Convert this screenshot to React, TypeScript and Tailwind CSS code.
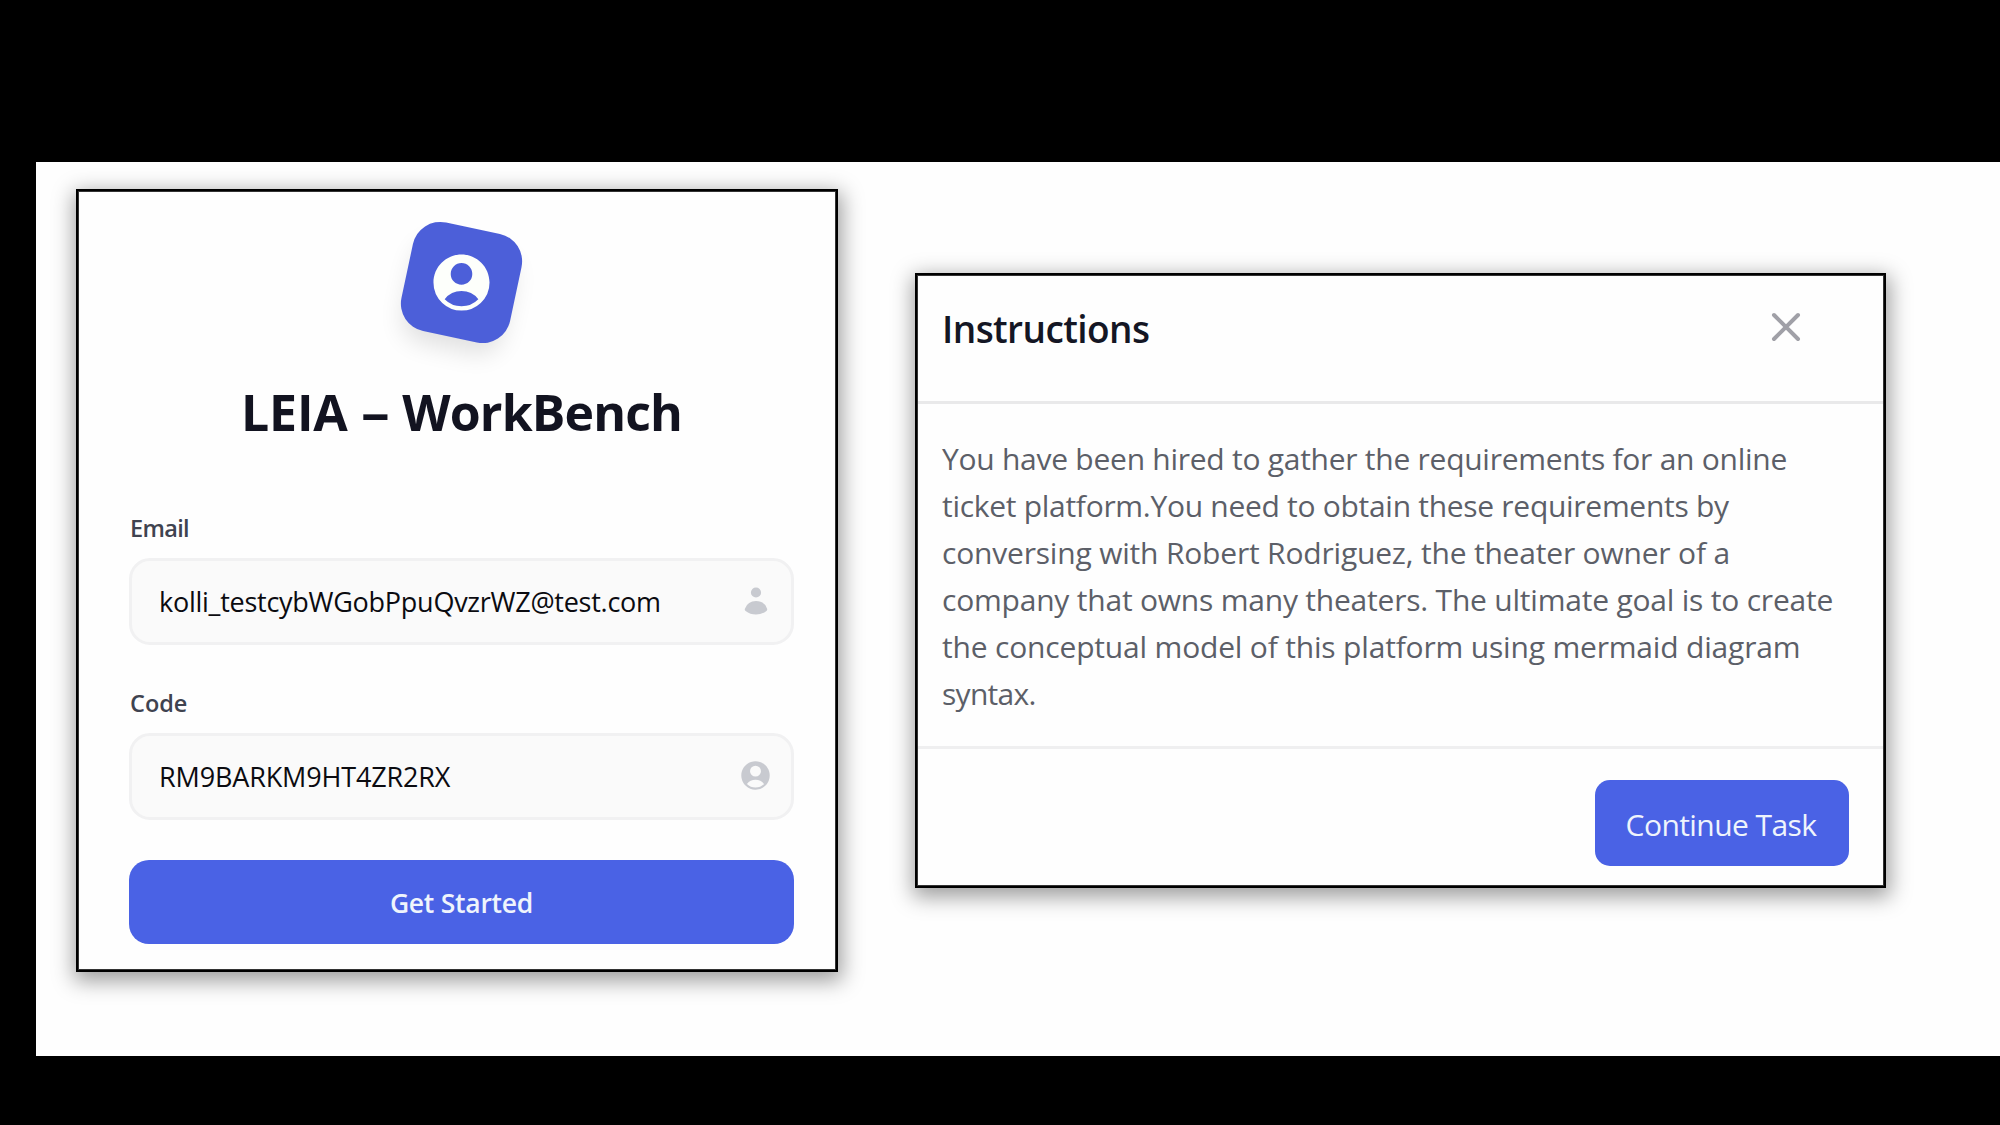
import type { ReactNode } from 'react';

const CARD =
  'bg-[#fefefe] outline-2 outline-offset-[-2px] outline-black border-[3px] border-[#333] shadow-[1px_6px_20px_3px_rgba(0,0,0,0.38)]';

function UserCircleIcon({ className }: { className: string }) {
  return (
    <svg viewBox="0 0 24 24" fill="currentColor" fillRule="evenodd" className={className}>
      <path d="M18.685 19.097A9.723 9.723 0 0 0 21.75 12c0-5.385-4.365-9.75-9.75-9.75S2.25 6.615 2.25 12a9.723 9.723 0 0 0 3.065 7.097A9.716 9.716 0 0 0 12 21.75a9.716 9.716 0 0 0 6.685-2.653Zm-12.54-1.285A7.486 7.486 0 0 1 12 15a7.486 7.486 0 0 1 5.855 2.812A8.224 8.224 0 0 1 12 20.25a8.224 8.224 0 0 1-5.855-2.438ZM15.75 9a3.75 3.75 0 1 1-7.5 0 3.75 3.75 0 0 1 7.5 0Z" />
    </svg>
  );
}

function UserIcon() {
  return (
    <svg viewBox="0 0 20 20" fill="currentColor" className="mb-[2px] size-[34px] text-[#c8cad0]">
      <path d="M10 8a3 3 0 1 0 0-6 3 3 0 0 0 0 6ZM3.465 14.493a1.23 1.23 0 0 0 .41 1.412A9.957 9.957 0 0 0 10 18c2.31 0 4.438-.784 6.131-2.1.43-.333.604-.903.408-1.41a7.002 7.002 0 0 0-13.074.003Z" />
    </svg>
  );
}

function Field({ label, value, icon }: { label: ReactNode; value: ReactNode; icon: ReactNode }) {
  return (
    <div>
      <div className="mb-[14px] h-8 pl-px text-[23.5px] leading-8 font-semibold text-[#3f4350]">{label}</div>
      <div className="flex h-[87px] w-[665px] items-center justify-between rounded-[21px] border-[3px] border-[#f1f1f2] bg-[#fafafa] pr-[18px] pl-[27px]">
        <span className="pt-[2px] text-[27px] whitespace-nowrap text-[#0b0b10]">{value}</span>
        {icon}
      </div>
    </div>
  );
}

function LoginCard() {
  return (
    <section className={`${CARD} mt-[27px] ml-[40px] flex h-[783px] w-[762px] shrink-0 flex-col pl-[50px]`}>
      <div className="mt-[35px] ml-[277px] flex size-[111px] rotate-12 items-center justify-center rounded-[28px] bg-[#4c5fd9] shadow-[0_16px_24px_-5px_rgba(0,0,0,0.12)]">
        <div className="-rotate-12">
          <UserCircleIcon className="size-[69px] text-[#fdfffb]" />
        </div>
      </div>
      <h1 className="mt-[44px] ml-[112px] h-[60px] text-[50px] leading-[60px] font-bold tracking-[-0.16px] whitespace-nowrap text-[#121320]">
        LEIA <span className="inline-block origin-left scale-x-[1.15]">–</span>{' '}
        <span className="ml-[4px] tracking-[-0.85px]">WorkBench</span>
      </h1>
      <div className="mt-[70px] flex flex-col gap-[42px]">
        <Field
          label={<span className="tracking-[-0.65px]">Email</span>}
          value={<span className="tracking-[-0.26px]">kolli_testcybWGobPpuQvzrWZ@test.com</span>}
          icon={<UserIcon />}
        />
        <Field
          label="Code"
          value={<span className="tracking-[-0.15px]">RM9BARKM9HT4ZR2RX</span>}
          icon={<UserCircleIcon className="mb-[2px] size-[35px] text-[#c8cad0]" />}
        />
      </div>
      <button className="mt-[40px] h-[84px] w-[665px] rounded-[20px] bg-[#4a62e5] pt-[3px] text-[26.5px] font-semibold tracking-[-0.25px] text-[#eff4fc]">
        Get Started
      </button>
    </section>
  );
}

function InstructionsCard() {
  return (
    <section className={`${CARD} mt-[111px] ml-[77px] h-[615px] w-[971px] shrink-0`}>
      <header className="flex h-[128px] items-start justify-between border-b-[3px] border-[#e9e9ea] pt-[28px] pr-[73px] pl-[24px]">
        <h2 className="pt-px text-[37px] leading-[48px] font-semibold tracking-[-0.58px] text-[#141624]">Instructions</h2>
        <svg
          viewBox="0 0 24 24"
          fill="none"
          stroke="currentColor"
          strokeWidth={2}
          strokeLinecap="round"
          className="-mt-px size-[48px] text-[#a0a0a7]"
        >
          <path d="M6 6l12 12M18 6L6 18" />
        </svg>
      </header>
      <div className="h-[345px] border-b-[3px] border-[#efeff0] pt-[31px] pl-[24px] text-[30px] leading-[47px] whitespace-nowrap text-[#5c5f68]">
        <div className="tracking-[-0.26px]">You have been hired to gather the requirements for an online</div>
        <div className="tracking-[-0.29px]">ticket platform.You need to obtain these requirements by</div>
        <div className="tracking-[-0.19px]">conversing with Robert Rodriguez, the theater owner of a</div>
        <div className="tracking-[-0.21px]">company that owns many theaters. The ultimate goal is to create</div>
        <div className="tracking-[-0.18px]">the conceptual model of this platform using mermaid diagram</div>
        <div className="tracking-[-0.7px]">syntax.</div>
      </div>
      <footer className="flex justify-end pt-[31px] pr-[34px]">
        <button className="h-[86px] w-[254px] rounded-[15px] bg-[#4a62e5] pt-[2px] pr-[2px] text-[30px] tracking-[-0.58px] text-[#eff4fc]">
          Continue Task
        </button>
      </footer>
    </section>
  );
}

export default function App() {
  return (
    <div className="h-[1125px] w-[2000px] overflow-hidden bg-black pt-[162px] pl-[36px] font-['Open_Sans',sans-serif]">
      <main className="flex h-[894px] items-start overflow-hidden bg-[#fefefe]">
        <LoginCard />
        <InstructionsCard />
      </main>
    </div>
  );
}
